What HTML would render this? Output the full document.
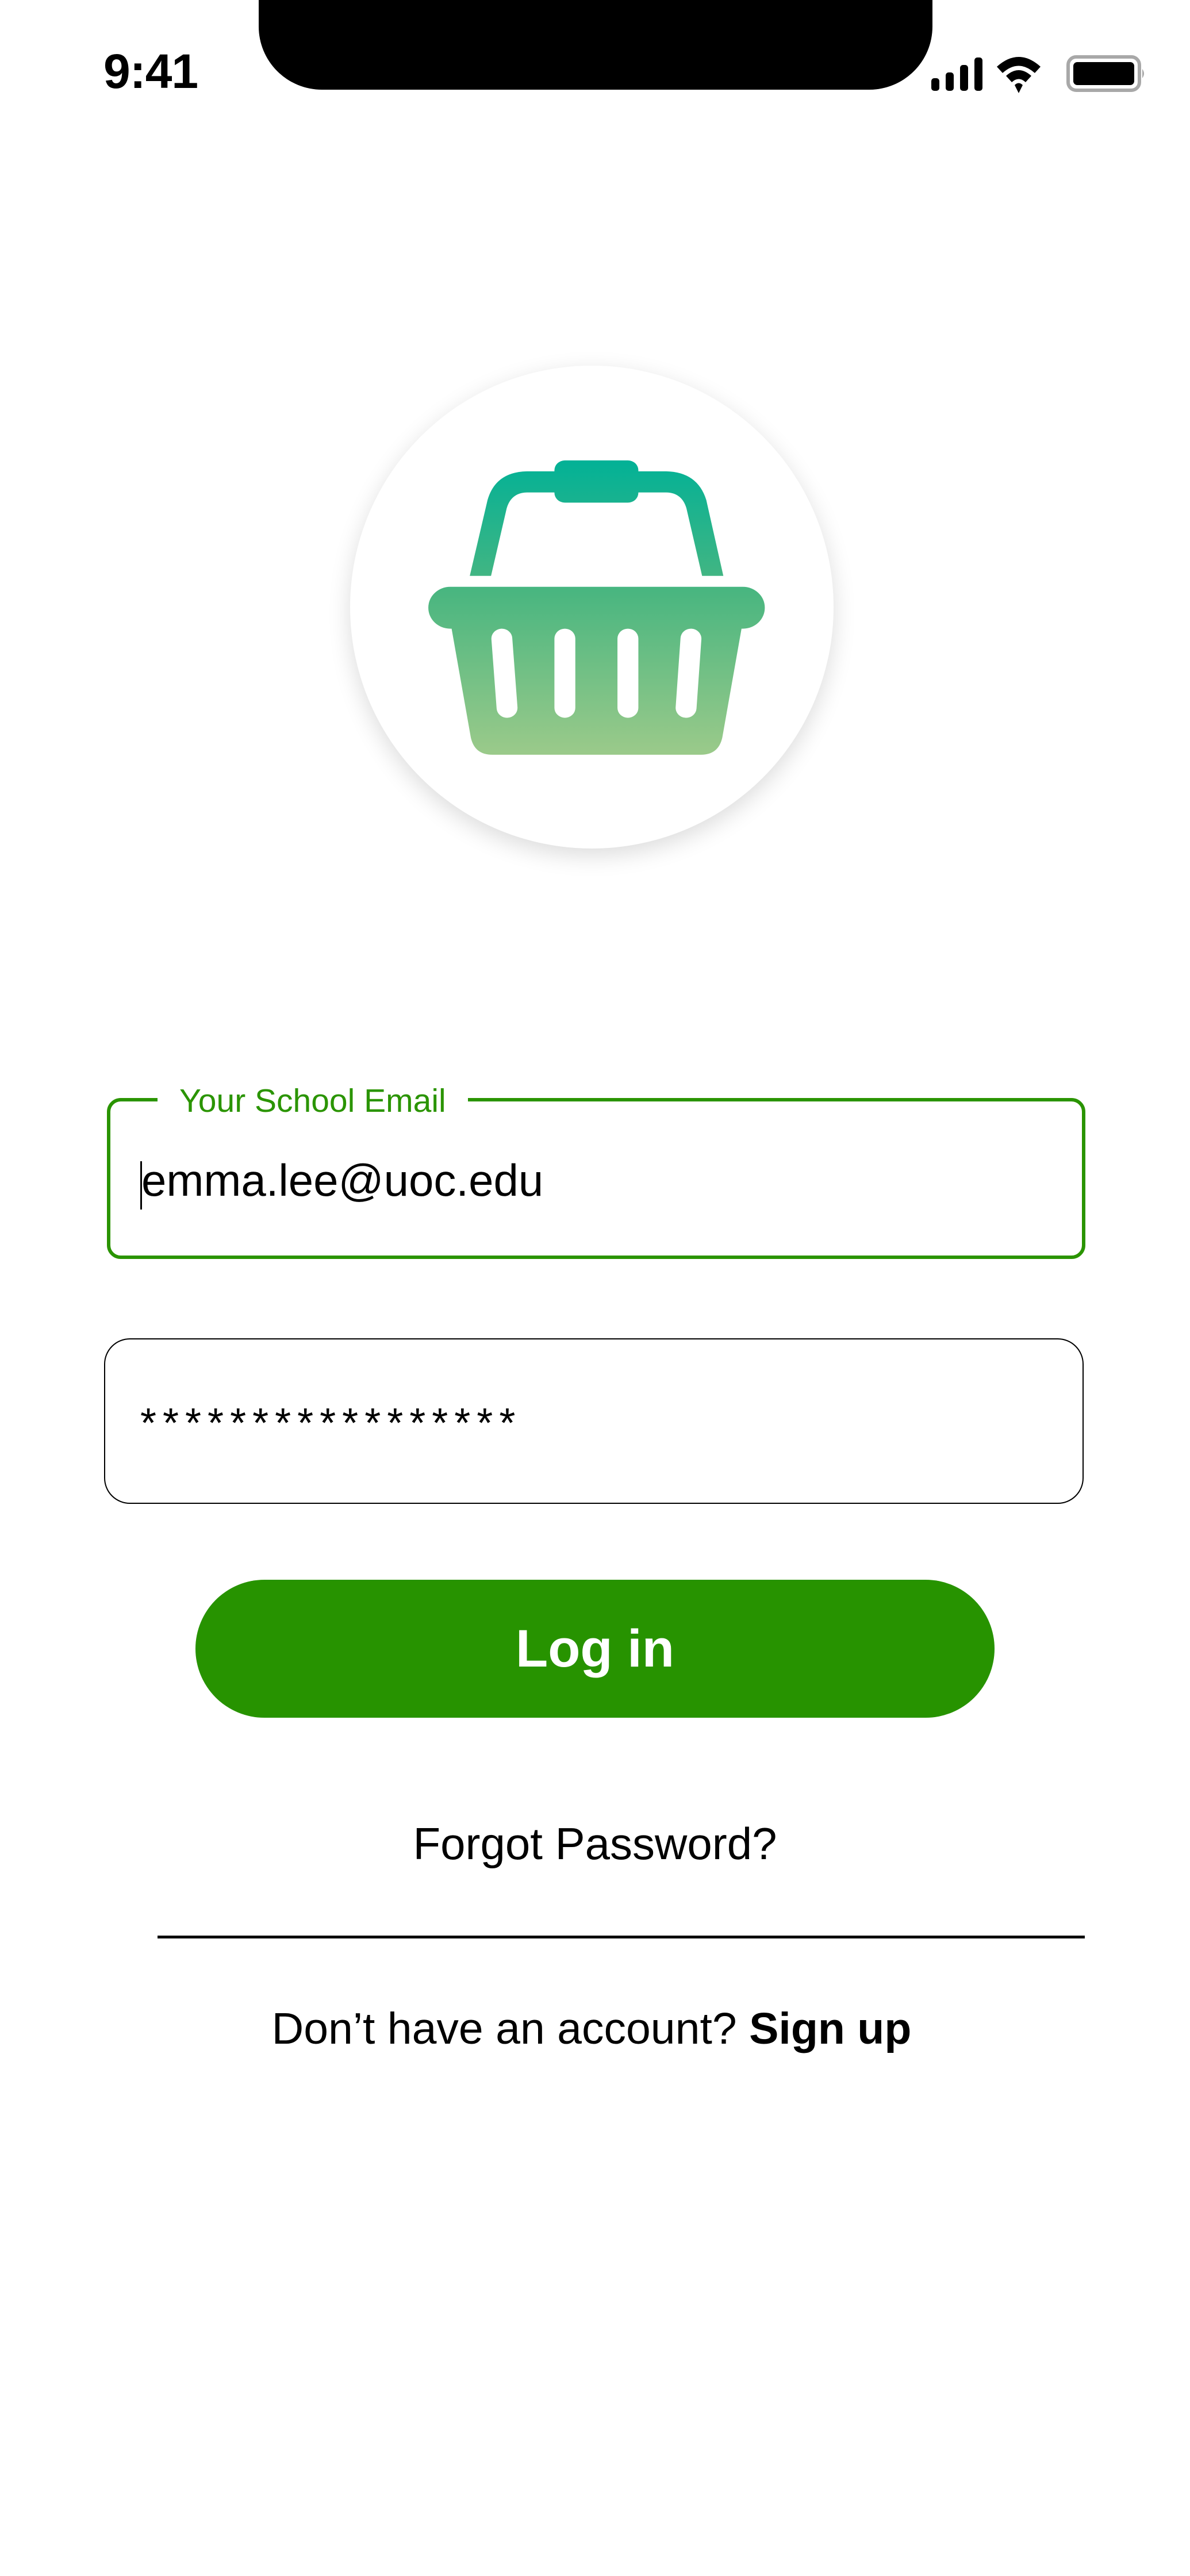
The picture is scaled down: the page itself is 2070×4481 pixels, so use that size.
<!DOCTYPE html>
<html><head><meta charset="utf-8"><style>
html,body{margin:0;padding:0;background:#fff;}
body{width:2070px;height:4481px;position:relative;overflow:hidden;font-family:"Liberation Sans",sans-serif;}
.abs{position:absolute;box-sizing:border-box;}
</style></head><body>
<!-- status bar -->
<div class="abs" style="left:450px;top:0;width:1172px;height:156px;background:#000;border-radius:0 0 110px 110px;"></div>
<div class="abs" style="left:180px;top:82px;font-size:84px;font-weight:bold;line-height:84px;color:#000;letter-spacing:-1px;">9:41</div>
<svg class="abs" style="left:1612px;top:92px" width="390" height="74" viewBox="0 0 390 74">
  <rect x="8" y="44" width="14" height="22" rx="5" fill="#000"/>
  <rect x="33" y="34" width="14" height="32" rx="5" fill="#000"/>
  <rect x="58" y="21" width="14" height="45" rx="5" fill="#000"/>
  <rect x="83" y="8" width="14" height="58" rx="5" fill="#000"/>
  <path d="M122 24 Q160 -10 198 24 L188 35 Q160 10 132 35 Z" fill="#000"/>
  <path d="M138 40 Q160 20 182 40 L172 51 Q160 40 148 51 Z" fill="#000"/>
  <path d="M153 56 Q160 49 167 56 L160 70 Z" fill="#000"/>
  <rect x="246" y="7" width="124" height="58" rx="14" fill="none" stroke="#a8a8a8" stroke-width="6"/>
  <rect x="255" y="16" width="106" height="40" rx="7" fill="#000"/>
  <path d="M375 28 Q381 36 375 44 Z" fill="#a8a8a8"/>
</svg>
<!-- logo circle -->
<div class="abs" style="left:609px;top:636px;width:841px;height:840px;border-radius:50%;background:#fff;box-shadow:0 12px 40px rgba(0,0,0,0.14);"></div>
<svg class="abs" style="left:550px;top:600px" width="950" height="900" viewBox="0 0 1568 1568" preserveAspectRatio="none">
  <defs><linearGradient id="g" x1="0" y1="350" x2="0" y2="1242" gradientUnits="userSpaceOnUse">
    <stop offset="0" stop-color="#02b196"/><stop offset="0.45" stop-color="#4ab680"/><stop offset="1" stop-color="#9bca8a"/></linearGradient></defs>
  <path d="M441 700 L492 470 Q515 385 605 383 L1005 383 Q1095 385 1120 470 L1169 700 L1108 700 L1063 495 Q1050 448 1005 447 L605 447 Q560 448 547 495 L502 700 Z" fill="url(#g)"/>
  <rect x="684" y="350" width="241" height="128" rx="30" fill="url(#g)"/>
  <rect x="322" y="733" width="966" height="127" rx="63" fill="url(#g)"/>
  <path d="M388 855 L1222 855 L1166 1190 Q1155 1242 1105 1242 L505 1242 Q455 1242 444 1190 Z" fill="url(#g)"/>
  <g stroke="#fff" stroke-width="60" stroke-linecap="round">
    <line x1="533" y1="890" x2="548" y2="1100"/>
    <line x1="714" y1="890" x2="714" y2="1100"/>
    <line x1="895" y1="890" x2="895" y2="1100"/>
    <line x1="1076" y1="890" x2="1062" y2="1100"/>
  </g>
</svg>
<!-- email field -->
<div class="abs" style="left:186px;top:1910px;width:1702px;height:280px;border:6px solid #2a9400;border-radius:24px;"></div>
<div class="abs" style="left:274px;top:1880px;padding:0 38px;background:#fff;color:#2a9400;font-size:57px;line-height:70px;">Your School Email</div>
<div class="abs" style="left:244px;top:2020px;width:3px;height:84px;background:#000;"></div>
<div class="abs" style="left:246px;top:2008px;font-size:78px;line-height:90px;color:#000;">emma.lee@uoc.edu</div>
<!-- password field -->
<div class="abs" style="left:181px;top:2328px;width:1704px;height:288px;border:2.5px solid #000;border-radius:45px;"></div>
<div class="abs" style="left:244px;top:2436px;font-size:72px;line-height:80px;color:#000;letter-spacing:11px;">*****************</div>
<!-- button -->
<div class="abs" style="left:340px;top:2748px;width:1390px;height:240px;border-radius:120px;background:#279300;color:#fff;font-weight:bold;font-size:92px;line-height:240px;text-align:center;">Log in</div>
<!-- forgot -->
<div class="abs" style="left:0;width:2070px;top:3162px;text-align:center;font-size:78px;line-height:90px;color:#000;">Forgot Password?</div>
<div class="abs" style="left:274px;top:3367px;width:1613px;height:5px;background:#000;"></div>
<div class="abs" style="left:0;width:2058px;top:3484px;text-align:center;font-size:77px;line-height:90px;color:#000;">Don’t have an account? <b>Sign up</b></div>
</body></html>
